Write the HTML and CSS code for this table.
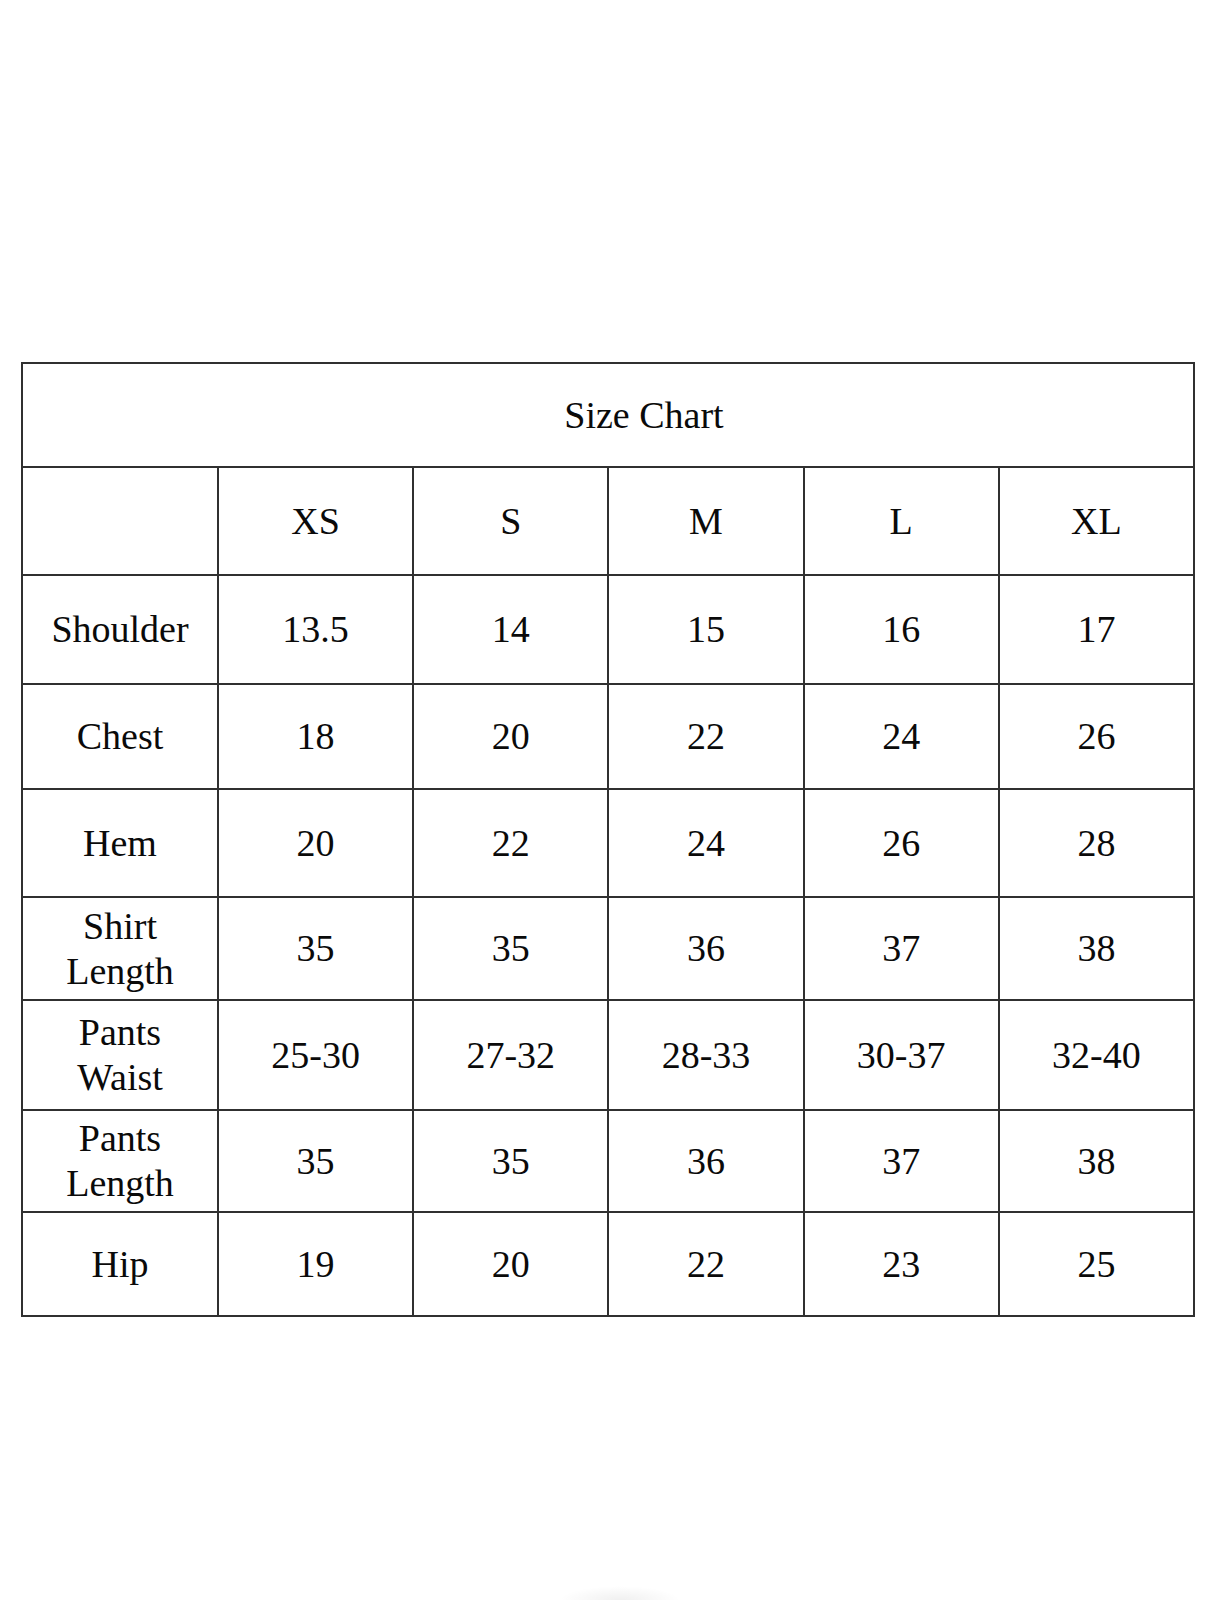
FILE: index.html
```html
<!DOCTYPE html>
<html lang="en">
<head>
<meta charset="utf-8">
<title>Size Chart</title>
<link rel="stylesheet" href="styles.css">
</head>
<body>
<main class="page">
  <table class="chart">
    <colgroup>
      <col class="c-label"><col class="c-size"><col class="c-size"><col class="c-size"><col class="c-size"><col class="c-size">
    </colgroup>
    <tbody>
      <tr class="r-title"><td colspan="6">Size Chart</td></tr>
      <tr class="r-head"><td></td><td>XS</td><td>S</td><td>M</td><td>L</td><td>XL</td></tr>
      <tr class="r-shoulder"><td>Shoulder</td><td>13.5</td><td>14</td><td>15</td><td>16</td><td>17</td></tr>
      <tr class="r-chest"><td>Chest</td><td>18</td><td>20</td><td>22</td><td>24</td><td>26</td></tr>
      <tr class="r-hem"><td>Hem</td><td>20</td><td>22</td><td>24</td><td>26</td><td>28</td></tr>
      <tr class="r-shirt"><td>Shirt<br>Length</td><td>35</td><td>35</td><td>36</td><td>37</td><td>38</td></tr>
      <tr class="r-waist"><td>Pants<br>Waist</td><td>25-30</td><td>27-32</td><td>28-33</td><td>30-37</td><td>32-40</td></tr>
      <tr class="r-plen"><td>Pants<br>Length</td><td>35</td><td>35</td><td>36</td><td>37</td><td>38</td></tr>
      <tr class="r-hip"><td>Hip</td><td>19</td><td>20</td><td>22</td><td>23</td><td>25</td></tr>
    </tbody>
  </table>
</main>
</body>
</html>
```

FILE: styles.css
```css
html, body {
  margin: 0;
  padding: 0;
}
body {
  width: 1218px;
  height: 1600px;
  background:
    radial-gradient(ellipse 60px 14px at 620px 1600px, rgba(0,0,0,0.06), rgba(0,0,0,0) 100%),
    #ffffff;
  font-family: "Liberation Serif", "Times New Roman", serif;
  color: #0a0a0a;
  overflow: hidden;
}
.page {
  padding: 362px 0 0 21px;
}
.chart {
  width: 1174px;
  border-collapse: collapse;
  table-layout: fixed;
  border: 2px solid #262626;
}
.chart td {
  border: 2px solid #303030;
  padding: 0;
  text-align: center;
  vertical-align: middle;
  font-size: 38px;
  line-height: 45px;
}
.c-label { width: 196px; }
.r-title td {
  height: 102px;
  padding-left: 72px;
}
.r-head td { height: 106px; }
.r-shoulder td { height: 107px; }
.r-chest td { height: 103px; }
.r-hem td { height: 106px; }
.r-shirt td { height: 101px; }
.r-waist td { height: 108px; }
.r-plen td { height: 100px; }
.r-hip td { height: 102px; }
```
